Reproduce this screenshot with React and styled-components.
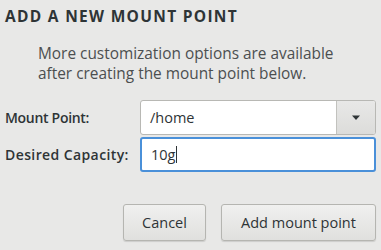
import React from 'react';
import styled, { createGlobalStyle } from 'styled-components';

const GlobalStyle = createGlobalStyle`
    html, body {
        margin: 0;
        padding: 0;
        background: #e8e8e7;
    }
    body {
        font-family: "Open Sans", "Noto Sans", sans-serif;
        color: #2e3436;
    }
`

const Dialog = styled.div`
    width: 381px;
    height: 250px;
    box-sizing: border-box;
    padding: 7px 5px 0 5px;
    display: flex;
    flex-direction: column;
    background: #e8e8e7;
`

const Title = styled.div`
    font-size: 15.5px;
    font-weight: 700;
    line-height: 18px;
    color: #2e3436;
    letter-spacing: 1.3px;
`

const Hint = styled.div`
    margin: 19px 0 0 33px;
    font-size: 15.4px;
    line-height: 20px;
    color: #4c4f50;
`

const Form = styled.div`
    margin-top: 16px;
    display: grid;
    grid-template-columns: 135px 1fr;
    row-gap: 2px;
    align-items: center;
`

const Label = styled.label`
    font-size: 14px;
    font-weight: 600;
    color: #2e3436;
    letter-spacing: ${props => props.$tight ? '-0.3px' : '0.4px'};
`

const Combo = styled.div`
    display: flex;
    height: 35px;
    box-sizing: border-box;
    border: 1px solid #b8b8b4;
    border-radius: 3px;
    background: #ffffff;
    overflow: hidden;
`

const ComboText = styled.div`
    flex: 1;
    display: flex;
    align-items: center;
    padding-left: 9px;
    font-size: 14.5px;
    color: #2e3436;
`

const ComboButton = styled.div`
    width: 38px;
    display: flex;
    align-items: center;
    justify-content: center;
    border-left: 1px solid #c2c2be;
    background: linear-gradient(#e8e8e7, #dcdcda);
`

const Entry = styled.div`
    height: 35px;
    box-sizing: border-box;
    border: 2px solid #4a90d9;
    border-radius: 3px;
    background: #ffffff;
    display: flex;
    align-items: center;
    padding-left: 9px;
    font-size: 14.5px;
    color: #2e3436;
`

const Caret = styled.span`
    display: inline-block;
    width: 1px;
    height: 17px;
    background: #2e3436;
    margin-left: 1px;
`

const Actions = styled.div`
    margin-top: auto;
    margin-bottom: 9px;
    display: flex;
    justify-content: flex-end;
    gap: 15px;
`

const Button = styled.button`
    height: 37px;
    box-sizing: border-box;
    padding: 0 ${props => props.$wide ? '17px' : '15px'};
    min-width: ${props => props.$wide ? '155px' : '83px'};
    border: 1px solid #b5b5b1;
    border-radius: 3px;
    background: linear-gradient(#f0f0ef, #e0e0de);
    box-shadow: 0 1px 1px rgba(0, 0, 0, 0.12);
    font-family: "Open Sans", "Noto Sans", sans-serif;
    font-size: 14.5px;
    color: #2e3436;
`

export default function App() {
    return <>
        <GlobalStyle />
        <Dialog>
            <Title>ADD A NEW MOUNT POINT</Title>
            <Hint>More customization options are available<br />after creating the mount point below.</Hint>
            <Form>
                <Label $tight>Mount Point:</Label>
                <Combo>
                    <ComboText>/home</ComboText>
                    <ComboButton>
                        <svg width="10" height="6" viewBox="0 0 10 6"><path d="M1 0.5 L9 0.5 L5 5 Z" fill="#2e3436" /></svg>
                    </ComboButton>
                </Combo>
                <Label>Desired Capacity:</Label>
                <Entry>10g<Caret /></Entry>
            </Form>
            <Actions>
                <Button>Cancel</Button>
                <Button $wide>Add mount point</Button>
            </Actions>
        </Dialog>
    </>
}
